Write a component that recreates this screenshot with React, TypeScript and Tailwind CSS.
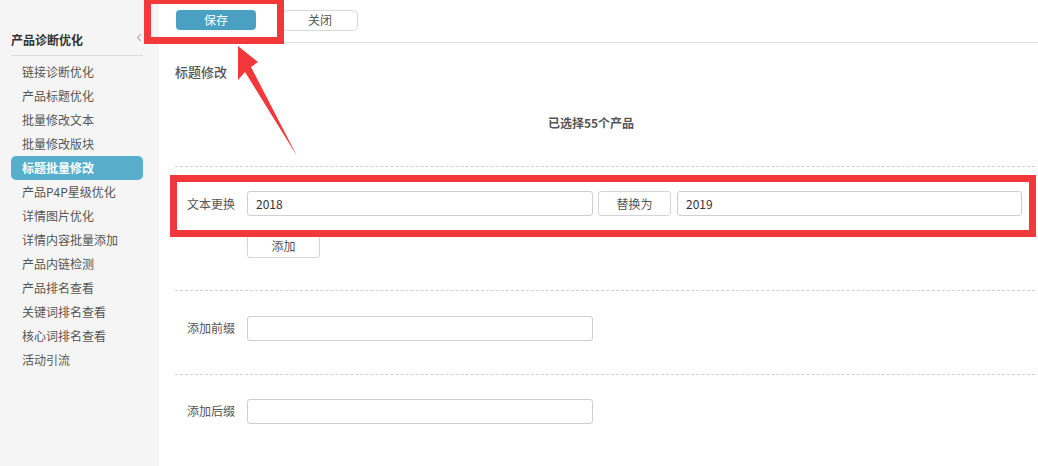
import React from "react";

const menu = [
  "链接诊断优化",
  "产品标题优化",
  "批量修改文本",
  "批量修改版块",
  "标题批量修改",
  "产品P4P星级优化",
  "详情图片优化",
  "详情内容批量添加",
  "产品内链检测",
  "产品排名查看",
  "关键词排名查看",
  "核心词排名查看",
  "活动引流",
];

const font = { fontFamily: '"Microsoft YaHei", "Noto Sans CJK SC", "Liberation Sans", sans-serif' };

function Sidebar() {
  return (
    <div className="w-[159px] shrink-0 bg-[#f5f5f6] pt-[31px] pl-[11px] pr-[16px]">
      <div className="flex items-center justify-between h-[18px]">
        <span className="text-[12px] font-bold text-[#333]">产品诊断优化</span>
        <svg width="6" height="9" viewBox="0 0 6 9" className="mr-[1px] -mt-[6px]">
          <path d="M5 1 L1.5 4.5 L5 8" fill="none" stroke="#b5b5b5" strokeWidth="1.2" />
        </svg>
      </div>
      <div className="mt-[6px] border-t border-[#dcdcdc]" />
      <div className="mt-[4px] flex flex-col">
        {menu.map((m) => (
          <div
            key={m}
            className={
              m === "标题批量修改"
                ? "h-[24px] flex items-center pl-[11px] rounded-[5px] bg-[#58afcb] text-white font-bold text-[12px]"
                : "h-[24px] flex items-center pl-[11px] text-[12px] text-[#555]"
            }
          >
            {m}
          </div>
        ))}
      </div>
    </div>
  );
}

function Row({ label, children }: { label: string; children: React.ReactNode }) {
  return (
    <div className="flex items-center pl-[12px]">
      <span className="w-[60px] text-[12px] text-[#555]">{label}</span>
      {children}
    </div>
  );
}

function Field({ value, w }: { value?: string; w: string }) {
  return (
    <div className={`${w} h-[25px] border border-[#cfcfcf] rounded-[3px] flex items-center pl-[8px] text-[12px] text-[#333]`}>
      {value}
    </div>
  );
}

export default function App() {
  return (
    <div className="relative flex w-[1038px] h-[466px] bg-white overflow-hidden" style={font}>
      <Sidebar />
      <div className="flex-1 flex flex-col">
        <div className="h-[43px] border-b border-[#e2e2e2] flex items-center pl-[17px] pb-[2px]">
          <button className="w-[80px] h-[20px] rounded-[4px] bg-[#4aa0c0] text-white text-[12px]">保存</button>
          <button className="ml-[26px] w-[76px] h-[21px] rounded-[5px] border border-[#d8d8d8] bg-white text-[12px] text-[#555]">关闭</button>
        </div>
        <div className="pl-[16px] pr-[3px]">
          <div className="mt-[20px] text-[13px] text-[#555] font-medium leading-[18px]">标题修改</div>
          <div className="mt-[34px] text-center pr-[28px] text-[12px] font-bold text-[#555] leading-[16px]">已选择55个产品</div>
          <div className="mt-[35px] border-t border-dashed border-[#cfcfcf]" />
          <div className="mt-[24px]">
            <Row label="文本更换">
              <Field value="2018" w="w-[346px]" />
              <button className="ml-[5px] w-[73px] h-[25px] border border-[#d5d5d5] rounded-[3px] text-[12px] text-[#555]">替换为</button>
              <div className="ml-[6px]">
                <Field value="2019" w="w-[345px]" />
              </div>
            </Row>
            <div className="pl-[72px] mt-[16px]">
              <button className="w-[73px] h-[23px] border border-[#d5d5d5] rounded-[3px] text-[12px] text-[#555]">添加</button>
            </div>
          </div>
          <div className="mt-[32px] border-t border-dashed border-[#cfcfcf]" />
          <div className="mt-[25px]">
            <Row label="添加前缀">
              <Field w="w-[346px]" />
            </Row>
          </div>
          <div className="mt-[33px] border-t border-dashed border-[#cfcfcf]" />
          <div className="mt-[24px]">
            <Row label="添加后缀">
              <Field w="w-[346px]" />
            </Row>
          </div>
        </div>
      </div>

      {/* annotations */}
      <div className="absolute left-[144px] top-[-3px] w-[140px] h-[47px] border-[7px] border-[#f2383b]" />
      <div className="absolute left-[170px] top-[175px] w-[866px] h-[62px] border-[7px] border-[#f2383b]" />
      <svg className="absolute left-0 top-0" width="1038" height="466">
        <polygon points="238,46 258,62 251,67 297,156 245,72 238,80" fill="#f2383b" />
      </svg>
    </div>
  );
}
